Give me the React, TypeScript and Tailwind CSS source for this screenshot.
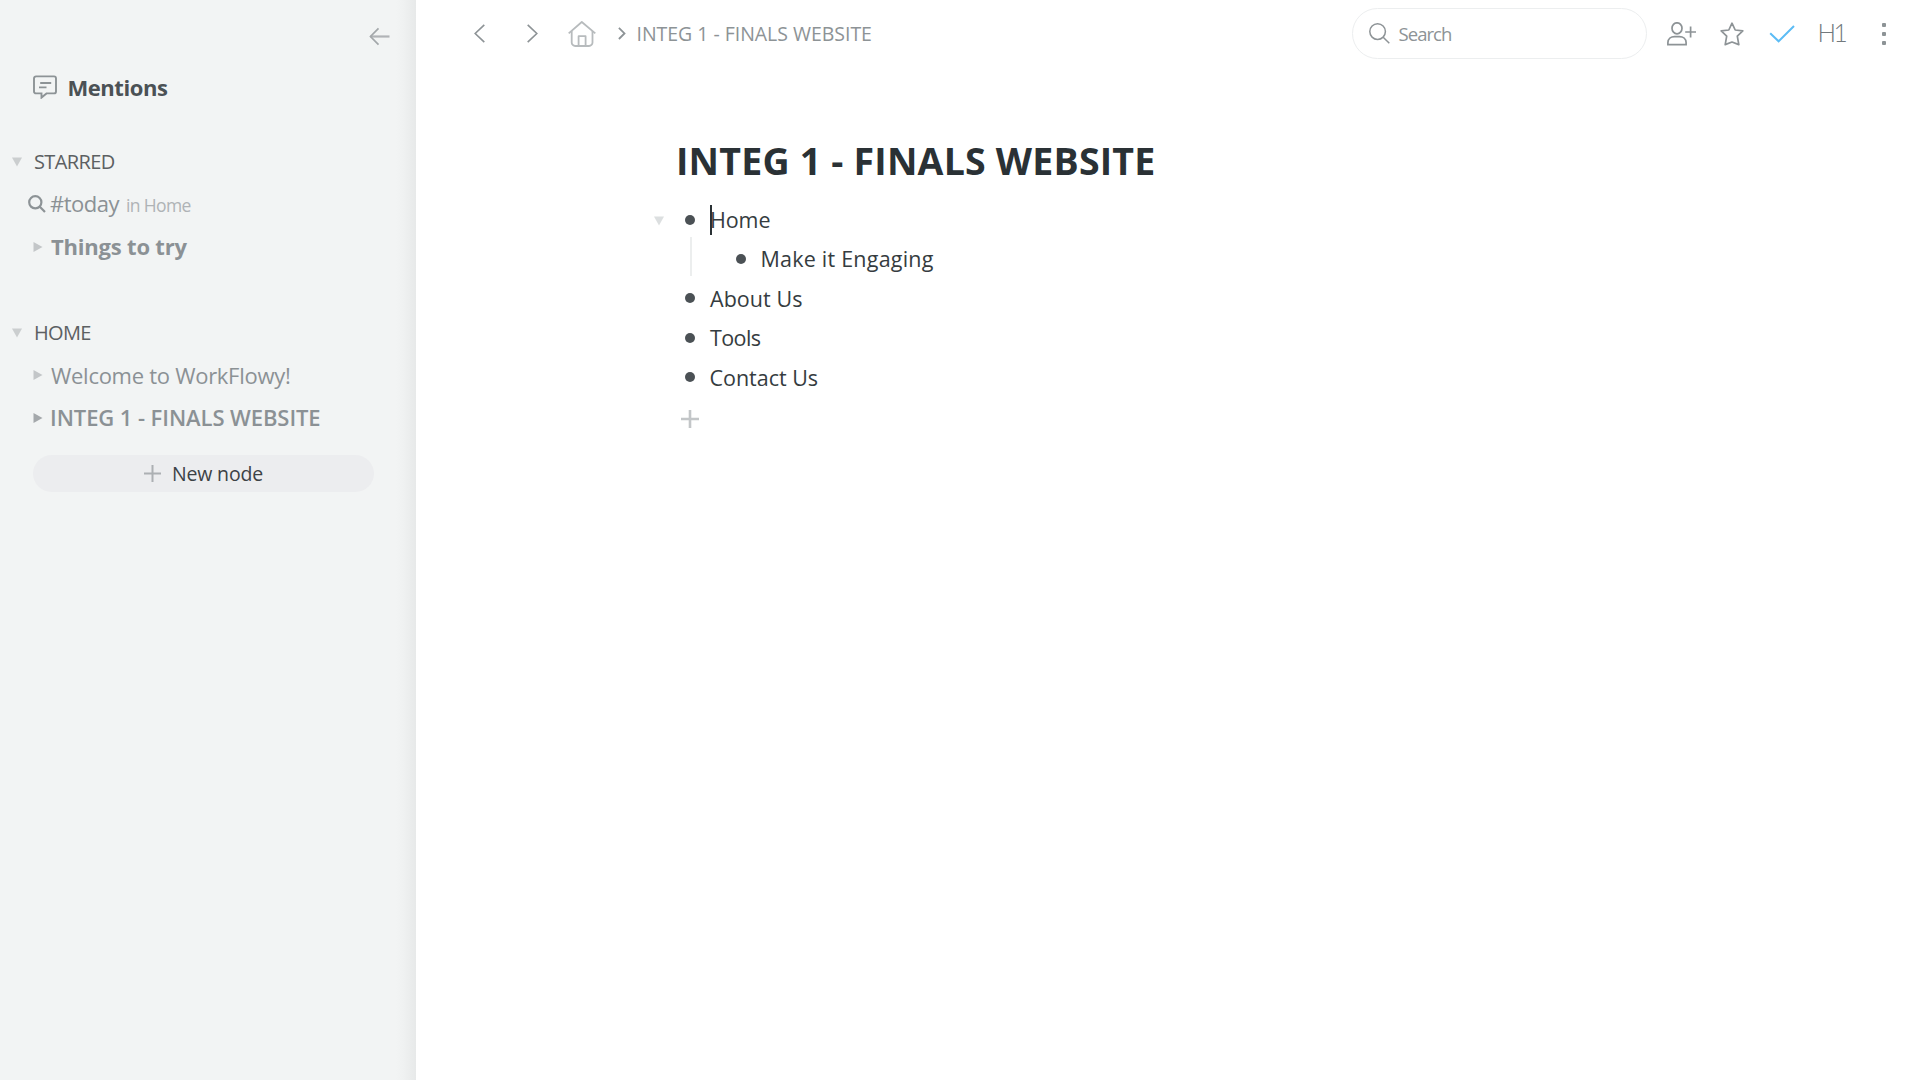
import type { ReactNode } from 'react';

function Triangle({ dir, className }: { dir: 'down' | 'right'; className: string }) {
  return (
    <svg width="10" height="10" viewBox="0 0 10 10" className={`shrink-0 ${className}`} fill="currentColor">
      <path d={dir === 'down' ? 'M0 0.5H10L5 9.5Z' : 'M0.5 0V10L9.5 5Z'} />
    </svg>
  );
}

function SectionHeader({ label, className }: { label: string; className: string }) {
  return (
    <div className="flex h-[42px] items-center pl-3">
      <Triangle dir="down" className="mt-0.5 text-[#cbcecf]" />
      <span className={`ml-3 mt-px text-[20px] text-[#5c6062] ${className}`}>{label}</span>
    </div>
  );
}

function TreeItem({ icon, children }: { icon: ReactNode; children: ReactNode }) {
  return (
    <div className="flex h-[43px] items-center text-[22px] text-[#8b9195]">
      <div className="flex w-[50px] shrink-0 justify-end">{icon}</div>
      {children}
    </div>
  );
}

function Bullet() {
  return <span className="h-2.5 w-2.5 shrink-0 rounded-full bg-[#4b5155]" />;
}

function OutlineRow({ label, className }: { label: string; className: string }) {
  return (
    <div className="flex h-[39.4px] items-center">
      <Bullet />
      <span className={`mt-px text-[21.5px] text-[#353c40] ${className}`}>{label}</span>
    </div>
  );
}

function Sidebar() {
  return (
    <aside className="flex w-[416px] shrink-0 flex-col bg-[linear-gradient(to_right,#f2f4f4_396px,#eff1f1_404px,#e7e9e9_416px)]">
      <div className="flex h-[72px] justify-end pr-[26px] pt-[27px]">
        <svg width="21" height="19" viewBox="0 0 21 19" fill="none" stroke="#b0b3b6" strokeWidth="2">
          <path d="M20.5 9.5H1.5" strokeWidth="2.2" />
          <path d="M9.5 1.3L1.5 9.5L9.5 17.7" stroke="#a3a7aa" strokeWidth="1.7" />
        </svg>
      </div>
      <div className="flex h-[31px] items-center pl-[33px]">
        <svg width="24" height="24" viewBox="0 0 24 24" fill="none" stroke="#8d9396" strokeWidth="1.9" className="-mt-0.5 shrink-0">
          <path d="M3 1.4H21A2 2 0 0 1 23 3.4V16.4A2 2 0 0 1 21 18.4H13.5L8.5 22.6V18.4H3A2 2 0 0 1 1 16.4V3.4A2 2 0 0 1 3 1.4Z" />
          <path d="M7.2 8H18.2M6 12.4H13.5" />
        </svg>
        <span className="ml-[10.5px] text-[22px] font-bold tracking-[-0.45px] text-[#4b5155]">Mentions</span>
      </div>
      <div className="mt-[37px]">
        <SectionHeader label="STARRED" className="tracking-[-0.6px]" />
        <TreeItem
          icon={
            <svg width="18" height="18" viewBox="0 0 18 18" fill="none" stroke="#8d9396" strokeWidth="2.2" className="mr-1">
              <circle cx="7.3" cy="7.3" r="6.1" />
              <path d="M11.8 11.8L17 17" />
            </svg>
          }
        >
          <span className="tracking-[-0.5px]">#today</span>
          <span className="ml-[7px] mt-[3px] text-[17.5px] tracking-[-0.65px] text-[#afb3b6]">in Home</span>
        </TreeItem>
        <TreeItem icon={<Triangle dir="right" className="mr-[7px] text-[#c3c6c8]" />}>
          <span className="ml-[1px] font-bold tracking-[-0.2px]">Things to try</span>
        </TreeItem>
      </div>
      <div className="mt-[43px]">
        <SectionHeader label="HOME" className="tracking-[-0.7px]" />
        <TreeItem icon={<Triangle dir="right" className="mr-[7px] text-[#c3c6c8]" />}>
          <span className="ml-[1px] mt-px tracking-[-0.28px]">Welcome to WorkFlowy!</span>
        </TreeItem>
        <TreeItem icon={<Triangle dir="right" className="mr-[7px] text-[#a4a8ab]" />}>
          <span className="font-semibold tracking-[-0.08px]">INTEG 1 - FINALS WEBSITE</span>
        </TreeItem>
      </div>
      <button className="ml-[33px] mt-4 flex h-[37px] w-[341px] items-center justify-center rounded-full bg-[#ecedef]">
        <svg width="17" height="17" viewBox="0 0 17 17" stroke="#acb0b3" strokeWidth="2">
          <path d="M8.5 0V17M0 8.5H17" />
        </svg>
        <span className="ml-[11px] text-[19.5px] tracking-[-0.2px] text-[#3c4246]">New node</span>
      </button>
    </aside>
  );
}

function TopBar() {
  return (
    <header className="flex h-[67px] items-center pl-[58px] text-[#8d9396]">
      <svg width="11" height="19" viewBox="0 0 11 19" fill="none" stroke="currentColor" strokeWidth="1.6">
        <path d="M10.3 0.8L1.2 9.5L10.3 18.2" />
      </svg>
      <svg width="11" height="19" viewBox="0 0 11 19" fill="none" stroke="currentColor" strokeWidth="1.6" className="ml-[42px]">
        <path d="M0.7 0.8L9.8 9.5L0.7 18.2" />
      </svg>
      <svg width="28" height="26" viewBox="0 0 28 26" fill="none" stroke="#b7bbbd" strokeWidth="1.8" className="ml-[30px]" strokeLinejoin="round">
        <path d="M0.7 12.4L13.8 1L27.3 12.4" />
        <path d="M3.7 10V21.5A3.5 3.5 0 0 0 7.2 25H21A3.5 3.5 0 0 0 24.5 21.5V10" />
        <path d="M10.6 25V15.2H17.6V25" />
      </svg>
      <svg width="8" height="13" viewBox="0 0 8 13" fill="none" stroke="currentColor" strokeWidth="1.8" className="ml-[22px]">
        <path d="M0.9 0.9L6.5 6.4L0.9 12" />
      </svg>
      <span className="ml-[10.5px] text-[19.5px] tracking-[-0.03px]">INTEG 1 - FINALS WEBSITE</span>
      <div className="ml-auto flex h-[51px] w-[295px] items-center rounded-full border-[1.5px] border-[#eceeef] pl-[16px]">
        <svg width="21" height="21" viewBox="0 0 21 21" fill="none" stroke="currentColor" strokeWidth="1.5">
          <circle cx="8.6" cy="8.6" r="7.8" />
          <path d="M14.2 14.2L20.3 20.3" />
        </svg>
        <span className="ml-[9px] text-[18.5px] tracking-[-0.95px]">Search</span>
      </div>
      <svg width="29" height="24" viewBox="0 0 29 24" fill="none" stroke="currentColor" strokeWidth="1.7" className="ml-5">
        <ellipse cx="10" cy="6.3" rx="5" ry="5.5" />
        <path d="M0.9 22.6V20.6C0.9 16.8 4 14.6 7.5 14.6H12.5C16 14.6 19.1 16.8 19.1 20.6V22.6Z" />
        <path d="M23.6 4.5V15.5M18.2 10H29" />
      </svg>
      <svg width="24" height="24" viewBox="0 0 24 24" fill="none" stroke="currentColor" strokeWidth="1.7" strokeLinejoin="round" className="ml-6">
        <path d="M12 1.2L15.2 8L22.8 8.9L17.3 14.2L18.8 22.6L12 20L5.2 22.6L6.7 14.2L1.2 8.9L8.8 8Z" />
      </svg>
      <svg width="26" height="18" viewBox="0 0 26 18" fill="none" stroke="#5cbcf5" strokeWidth="2" className="ml-[25px]">
        <path d="M1.2 8.2L9.6 16.3L25 1" />
      </svg>
      <span className="ml-[23px] w-7 font-['Lato',sans-serif] text-[24.5px] font-light tracking-[-2.6px] text-[#72797d]">H1</span>
      <div className="ml-[36.5px] mr-[34px] flex flex-col gap-[5px]">
        <span className="h-1 w-1 rounded-[1px] bg-[#8d9396]" />
        <span className="h-1 w-1 rounded-[1px] bg-[#8d9396]" />
        <span className="h-1 w-1 rounded-[1px] bg-[#8d9396]" />
      </div>
    </header>
  );
}

function Outline() {
  return (
    <section className="pl-[238px] pt-[69px]">
      <h1 className="ml-[22px] h-[50px] text-[37.5px] font-bold leading-[50px] tracking-[0.2px] text-[#2a3135]">INTEG 1 - FINALS WEBSITE</h1>
      <div className="mt-[14px] flex h-[39.4px] items-center">
        <Triangle dir="down" className="mt-[2px] text-[#dcdfe0]" />
        <span className="ml-[21px] flex"><Bullet /></span>
        <span className="ml-[15px] h-[30px] w-[1.5px] bg-[#2a3135]" />
        <span className="ml-[-1.5px] text-[21.5px] tracking-[-0.1px] text-[#353c40]">Home</span>
      </div>
      <div className="ml-[36px] flex h-[39.4px] items-center">
        <span className="mr-[44px] h-[39px] w-[1.5px] -translate-y-[3px] bg-[#eceeee]" />
        <OutlineRow label="Make it Engaging" className="ml-[15px] tracking-[0.22px]" />
      </div>
      <div className="ml-[31px]">
        <OutlineRow label="About Us" className="ml-[15px] tracking-[0.05px]" />
        <OutlineRow label="Tools" className="ml-[15px] tracking-[-0.6px]" />
        <OutlineRow label="Contact Us" className="ml-[14.5px] tracking-[-0.02px]" />
      </div>
      <svg width="18" height="18" viewBox="0 0 18 18" stroke="#c3c6c8" strokeWidth="2.6" className="ml-[27px] mt-[13px]">
        <path d="M9 0V18M0 9H18" />
      </svg>
    </section>
  );
}

export default function App() {
  return (
    <div className="flex h-screen w-full overflow-hidden whitespace-nowrap bg-white font-['Open_Sans','Noto_Sans',sans-serif]">
      <Sidebar />
      <main className="min-w-0 flex-1">
        <TopBar />
        <Outline />
      </main>
    </div>
  );
}
